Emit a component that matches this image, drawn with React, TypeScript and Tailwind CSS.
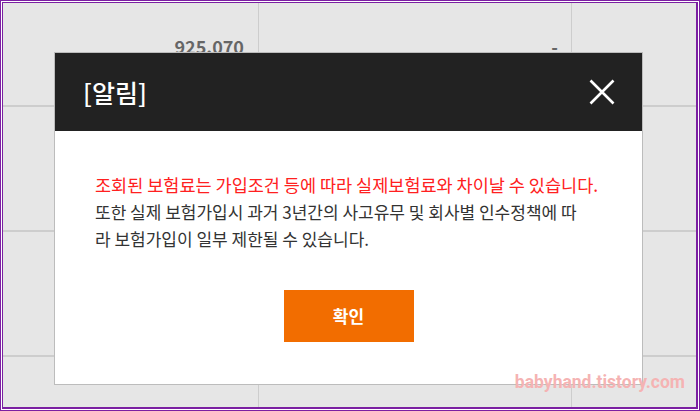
import React from "react";

const KR = { fontFamily: '"Noto Sans CJK KR", "Noto Sans", sans-serif' };

function Row({ h, first, last }: { h: string; first?: boolean; last?: boolean }) {
  return (
    <div className={`flex ${h} ${last ? "" : "border-b-2 border-[#cdcdcd]"}`}>
      <div className="w-[256px] border-r border-[#cdcdcd] flex items-start justify-end pr-[14px] pt-[30px]">
        {first && (
          <span className="text-[18px] font-semibold text-[#666666] leading-[26px]" style={KR}>
            925.070
          </span>
        )}
      </div>
      <div className="w-[313px] border-r border-[#cdcdcd] flex items-start justify-end pr-[13px] pt-[30px]">
        {first && (
          <span className="text-[18px] font-semibold text-[#666666] leading-[26px]" style={KR}>
            -
          </span>
        )}
      </div>
      <div className="flex-1" />
    </div>
  );
}

export default function App() {
  return (
    <div className="w-[700px] h-[411px] bg-white border border-[#7b1fa2] p-[1px] overflow-hidden">
      <div className="relative w-full h-full bg-[#e6e6e6] border-t border-l border-r-2 border-b-2 border-[#7b1fa2] overflow-hidden">
        <div className="flex flex-col">
          <Row h="h-[104px]" first />
          <Row h="h-[125px]" />
          <Row h="h-[125px]" />
          <Row h="h-[60px]" last />
        </div>

        <div
          className="absolute left-[51px] top-[49px] w-[589px] h-[333px] border border-[#bcbcbc] bg-white flex flex-col"
          style={KR}
        >
          <div className="h-[78px] bg-[#222222] flex items-center justify-between pl-[28px] pr-[27px] shrink-0">
            <span className="text-white text-[25px] leading-none font-medium">[알림]</span>
            <svg width="26" height="26" viewBox="0 0 26 26" className="block">
              <path d="M1.5 1.5 L24.5 24.5 M24.5 1.5 L1.5 24.5" stroke="#ffffff" strokeWidth="2.6" strokeLinecap="butt" />
            </svg>
          </div>
          <div className="flex-1 flex flex-col pt-[40px] pl-[40px]">
            <div className="leading-[27px] whitespace-nowrap">
              <div className="text-[#ff2020] text-[17.5px]">조회된 보험료는 가입조건 등에 따라 실제보험료와 차이날 수 있습니다.</div>
              <div className="text-[#333333] text-[17px]">또한 실제 보험가입시 과거 3년간의 사고유무 및 회사별 인수정책에 따</div>
              <div className="text-[#333333] text-[17px]">라 보험가입이 일부 제한될 수 있습니다.</div>
            </div>
            <div className="flex justify-center pr-[40px] mt-[38px]">
              <div className="w-[130px] h-[52px] bg-[#f26d00] flex items-center justify-center text-white text-[17px] font-bold">
                확인
              </div>
            </div>
          </div>
        </div>

        <div
          className="absolute right-[11px] top-[371px] text-[17.5px] font-bold text-[#f5b3b3] leading-none"
          style={{ fontFamily: "Roboto, sans-serif" }}
        >
          babyhand.tistory.com
        </div>
      </div>
    </div>
  );
}
